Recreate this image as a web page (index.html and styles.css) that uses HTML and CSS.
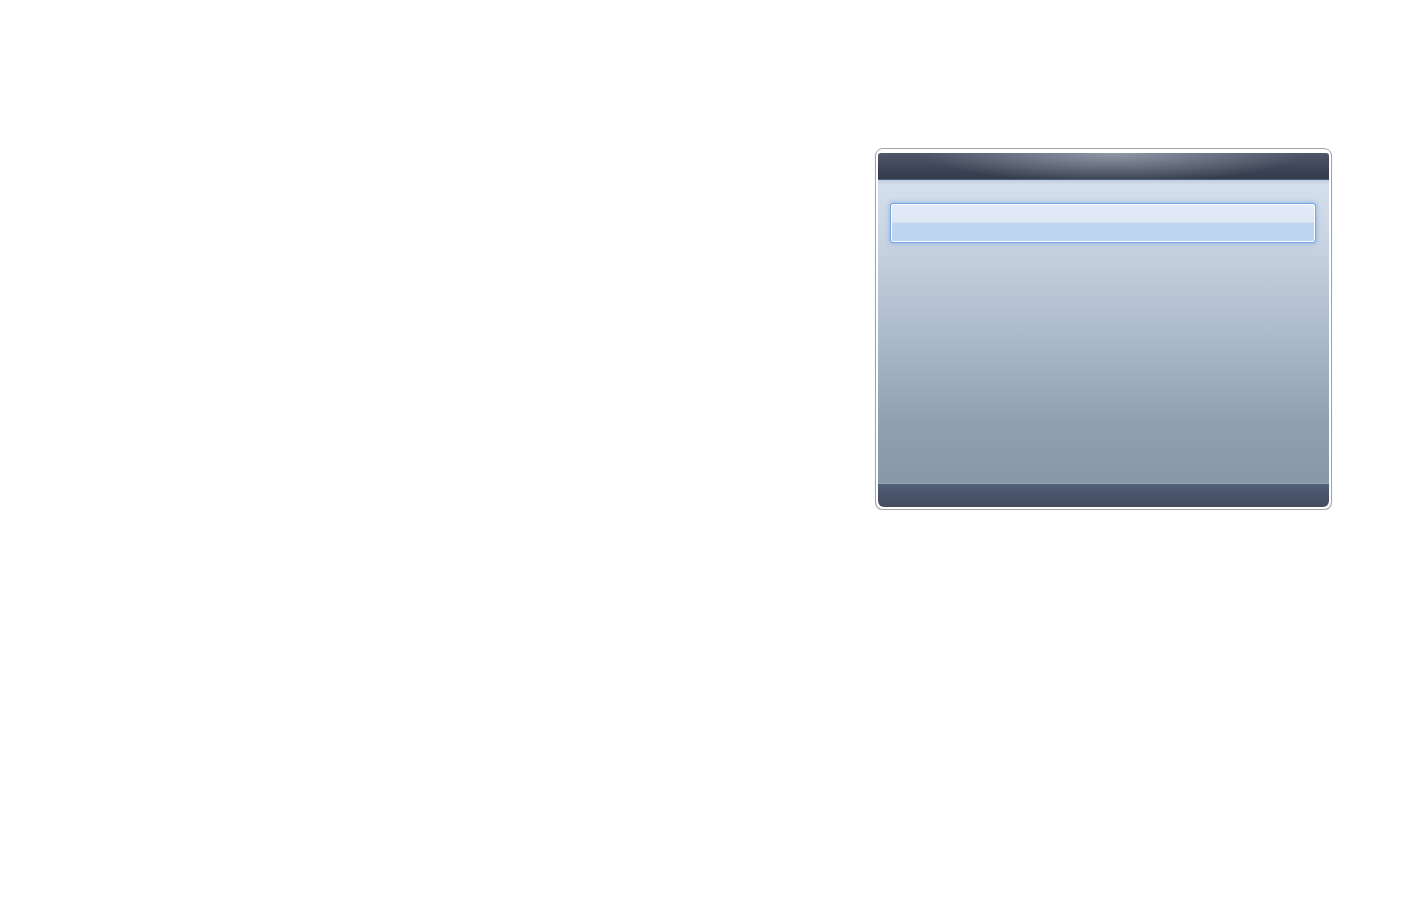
FILE: index.html
```html
<!DOCTYPE html>
<html lang="en">
<head>
<meta charset="UTF-8" />
<meta name="viewport" content="width=device-width, initial-scale=1" />
<title>Menu</title>
<link rel="stylesheet" href="styles.css">
</head>
<body>
<div class="stage">
  <div class="panel">
    <div class="panel-inner">
      <div class="panel-header"></div>
      <div class="panel-body">
        <div class="menu-item selected"></div>
      </div>
      <div class="panel-footer"></div>
    </div>
  </div>
</div>
</body>
</html>
```
FILE: styles.css
```css
body {
  margin: 0;
  background: #fff;
  font-family: "Liberation Sans", Arial, sans-serif;
}
.stage {
  display: flex;
  justify-content: flex-end;
  padding: 148px 72px 0 0;
}
.panel {
  box-sizing: border-box;
  width: 457px;
  height: 362px;
  border: 1px solid #a4a4a4;
  border-radius: 8px;
  background: #fff;
  padding: 4px 2px 2px 2px;
  box-shadow: 0 1px 1px rgb(0 0 0 / 0.2);
}
.panel-inner {
  height: 100%;
  display: flex;
  flex-direction: column;
  border-radius: 3px 3px 6px 6px;
  overflow: hidden;
}
.panel-header {
  height: 26px;
  flex: none;
  background:
    radial-gradient(ellipse 190px 30px at 52% 0, rgb(160 168 182 / 0.8), rgb(160 168 182 / 0) 100%),
    linear-gradient(to bottom, #4f5768 0%, #3d4455 60%, #343a4a 100%);
  border-bottom: 1px solid #4d5d7c;
}
.panel-body {
  flex: 1;
  padding: 24px 14px 0 13px;
  background:
    linear-gradient(to bottom, rgb(150 165 190 / 0.35), rgb(150 165 190 / 0) 5px),
    linear-gradient(to bottom, #d6e0ed 0%, #c9d4e2 20%, #aebbca 50%, #929fb1 80%, #8a97a8 100%);
  border-bottom: 1px solid #97a3b6;
}
.menu-item {
  height: 38px;
  box-sizing: border-box;
  border-radius: 2px;
}
.menu-item.selected {
  border: 1px solid #ffffff;
  outline: 1px solid #76a7de;
  box-shadow: 0 0 4px 2px rgb(110 160 225 / 0.55);
  background: linear-gradient(to bottom, #e2ecf8 0%, #dde8f5 48%, #c0d6f0 50%, #bdd4ef 100%);
}
.panel-footer {
  height: 23px;
  flex: none;
  background: linear-gradient(to bottom, #52607a 0%, #4a556b 40%, #454c5e 100%);
}
```
